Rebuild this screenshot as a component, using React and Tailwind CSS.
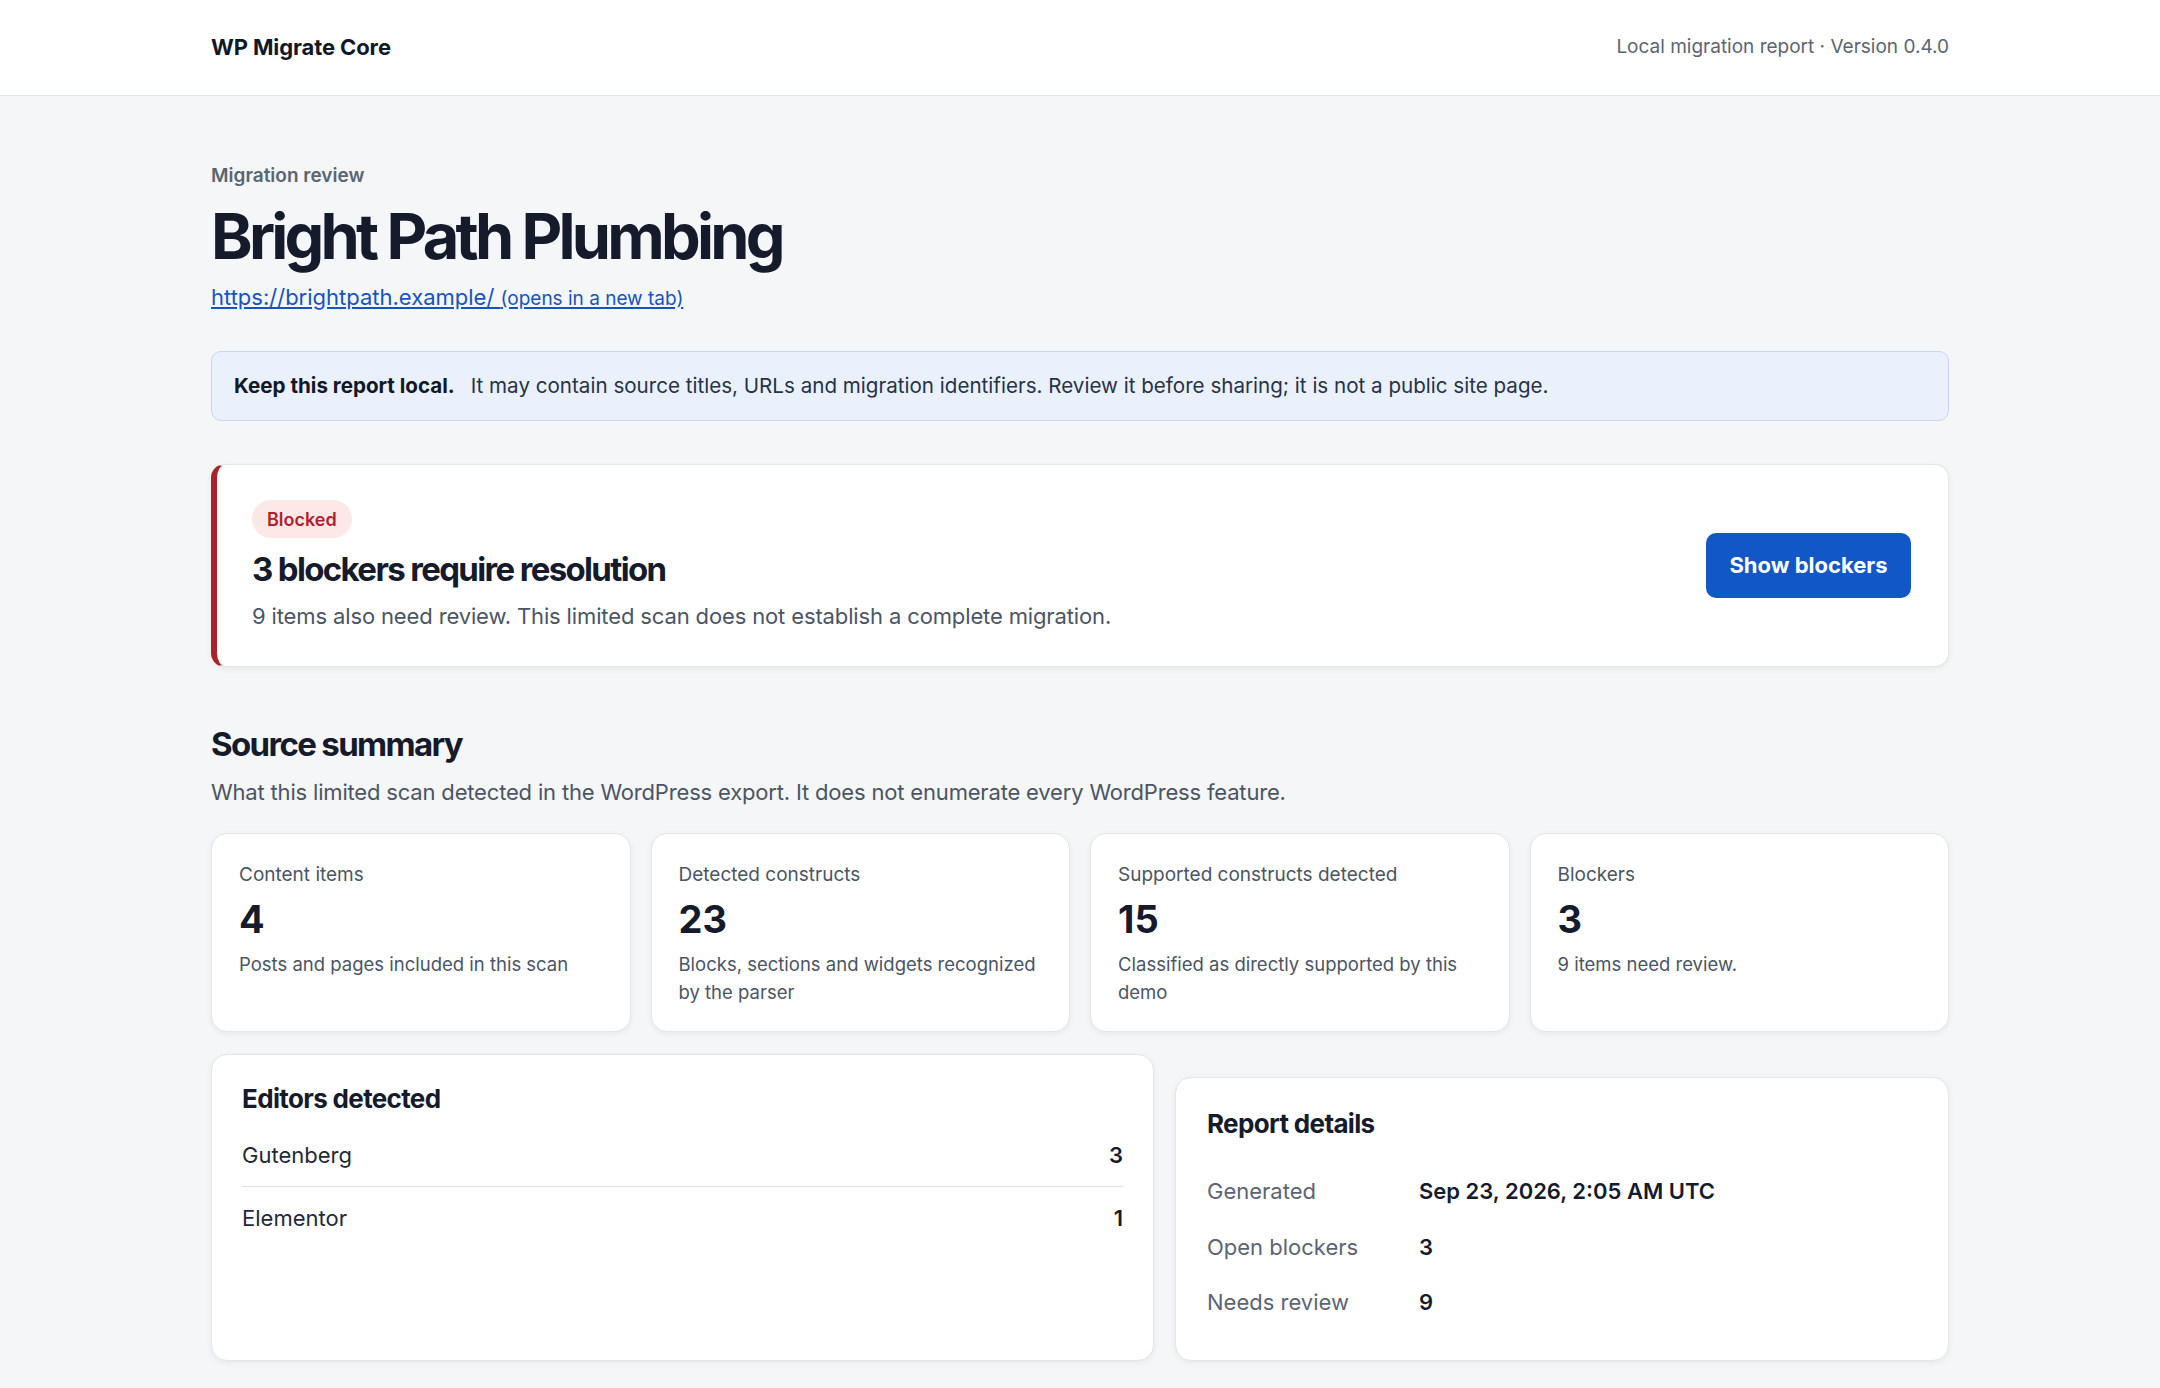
export default function App() {
  const stats = [
    { label: "Content items", value: "4", desc: "Posts and pages included in this scan" },
    { label: "Detected constructs", value: "23", desc: "Blocks, sections and widgets recognized by the parser" },
    { label: "Supported constructs detected", value: "15", desc: "Classified as directly supported by this demo" },
    { label: "Blockers", value: "3", desc: "9 items need review." },
  ];
  return (
    <div className="min-h-screen bg-[#f4f6f8] text-[#111827]" style={{ fontFamily: "Inter, 'Noto Sans', sans-serif" }}>
      <header className="h-[96px] bg-white border-b border-[#e3e6ea]">
        <div className="w-[1738px] mx-auto h-full flex items-center justify-between">
          <div className="text-[22px] font-bold text-[#111827] tracking-[-0.005em]">WP Migrate Core</div>
          <div className="text-[19px] text-[#5b6472]">Local migration report · Version 0.4.0</div>
        </div>
      </header>
      <main className="w-[1738px] mx-auto pt-[67px] pb-[27px]">
        <div className="text-[19px] leading-[26px] font-semibold text-[#5b6472]">Migration review</div>
        <h1 className="mt-[12px] text-[63px] leading-[70px] font-bold tracking-[-0.06em] text-[#151b2b]">Bright Path Plumbing</h1>
        <div className="mt-[11px] leading-[30px]">
          <a href="#" className="text-[22px] text-[#1554c0] underline underline-offset-2">
            https://brightpath.example/ <span className="text-[19px]">(opens in a new tab)</span>
          </a>
        </div>
        <div className="mt-[37px] h-[70px] rounded-[10px] border border-[#c7d6f1] bg-[#eaf1fd] flex items-center px-[22px] text-[20.6px]">
          <span className="font-bold text-[#111827]">Keep this report local.</span>
          <span className="ml-[16px] text-[#263247]">It may contain source titles, URLs and migration identifiers. Review it before sharing; it is not a public site page.</span>
        </div>
        <section className="mt-[43px] h-[203px] rounded-[14px] bg-white border border-[#e2e5e9] border-l-[6px] border-l-[#a8232a] shadow-[0_2px_6px_rgba(15,23,42,0.06)] flex items-center justify-between pl-[35px] pr-[37px]">
          <div>
            <span className="inline-flex items-center h-[38px] px-[15px] rounded-full bg-[#fde8e8] text-[#b0222a] text-[18px] font-semibold">Blocked</span>
            <h2 className="mt-[10px] text-[33px] leading-[42px] font-bold tracking-[-0.05em] text-[#151b2b]">3 blockers require resolution</h2>
            <p className="mt-[11px] text-[22px] leading-[30px] tracking-[-0.006em] text-[#4b5563]">9 items also need review. This limited scan does not establish a complete migration.</p>
          </div>
          <button className="h-[65px] w-[205px] rounded-[10px] bg-[#1257c6] text-white text-[22px] font-bold">Show blockers</button>
        </section>
        <h2 className="mt-[57px] text-[33px] leading-[40px] font-bold tracking-[-0.05em] text-[#151b2b]">Source summary</h2>
        <p className="mt-[13px] text-[22px] leading-[30px] tracking-[-0.008em] text-[#4b5563]">What this limited scan detected in the WordPress export. It does not enumerate every WordPress feature.</p>
        <div className="mt-[26px] grid grid-cols-4 gap-[20px]">
          {stats.map((s) => (
            <div key={s.label} className="h-[199px] rounded-[16px] bg-white border border-[#e2e5e9] shadow-[0_2px_6px_rgba(15,23,42,0.06)] pt-[28px] px-[27px]">
              <div className="text-[19px] leading-[26px] text-[#4b5563]">{s.label}</div>
              <div className="mt-[9px] text-[38px] leading-[44px] font-bold text-[#151b2b]">{s.value}</div>
              <div className="mt-[9px] text-[18.5px] leading-[28px] text-[#4b5563]">{s.desc}</div>
            </div>
          ))}
        </div>
        <div className="mt-[22px] grid grid-cols-[943px_774px] gap-[21px] items-end">
          <div className="h-[307px] rounded-[16px] bg-white border border-[#e2e5e9] shadow-[0_2px_6px_rgba(15,23,42,0.06)] pt-[27px] px-[30px]">
            <h3 className="text-[26px] leading-[34px] font-bold tracking-[-0.025em] text-[#151b2b]">Editors detected</h3>
            <div className="mt-[9px]">
              <div className="h-[62px] flex items-center justify-between border-b border-[#dfe2e6] text-[22px]">
                <span className="text-[#1f2937]">Gutenberg</span>
                <span className="font-semibold text-[#151b2b]">3</span>
              </div>
              <div className="h-[63px] flex items-center justify-between text-[22px]">
                <span className="text-[#1f2937]">Elementor</span>
                <span className="font-semibold text-[#151b2b]">1</span>
              </div>
            </div>
          </div>
          <div className="h-[284px] rounded-[16px] bg-white border border-[#e2e5e9] shadow-[0_2px_6px_rgba(15,23,42,0.06)] pt-[29px] px-[31px]">
            <h3 className="text-[26px] leading-[34px] font-bold tracking-[-0.025em] text-[#151b2b]">Report details</h3>
            <div className="mt-[23px]">
              {[
                ["Generated", "Sep 23, 2026, 2:05 AM UTC"],
                ["Open blockers", "3"],
                ["Needs review", "9"],
              ].map(([k, v]) => (
                <div key={k} className="h-[55.5px] flex items-center text-[22px]">
                  <span className="w-[212px] text-[#5b6472]">{k}</span>
                  <span className="font-semibold text-[#151b2b]">{v}</span>
                </div>
              ))}
            </div>
          </div>
        </div>
      </main>
    </div>
  );
}
